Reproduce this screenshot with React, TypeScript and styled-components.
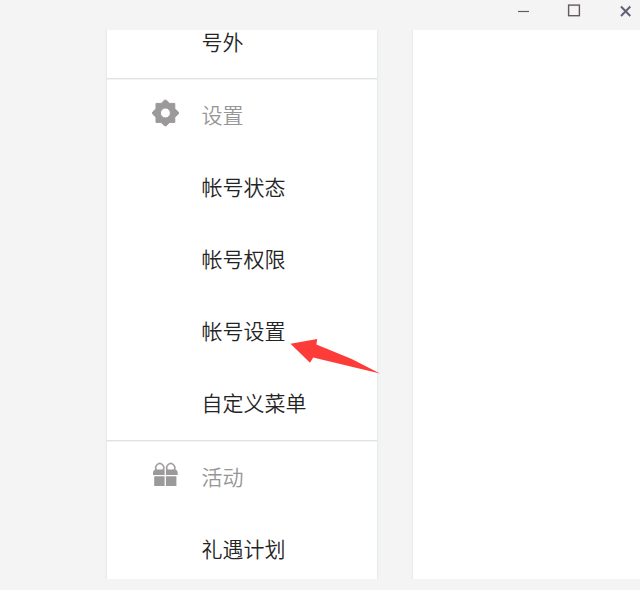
import React from 'react';
import styled, { createGlobalStyle } from 'styled-components';

const GlobalStyle = createGlobalStyle`
  * { box-sizing: border-box; }
  body { margin: 0; background: #f4f4f4; }
`;

const Window = styled.div`
  width: 640px;
  height: 590px;
  overflow: hidden;
  display: flex;
  flex-direction: column;
  background: #f4f4f4;
  font-family: 'Noto Sans CJK SC', sans-serif;
`;

const TitleBar = styled.header`
  flex: 0 0 30px;
  display: flex;
  justify-content: flex-end;
`;

const Controls = styled.svg`
  display: block;
  width: 140px;
  height: 30px;
`;

const Body = styled.div`
  height: 549px;
  overflow: hidden;
  display: flex;
  gap: 36px;
  padding-left: 107px;
`;

const Sidebar = styled.nav`
  position: relative;
  flex: 0 0 270px;
  background: #fff;
  box-shadow: 0 0 0 1px #e8eaec, 0 0 5px #e7e9ed;
`;

const Content = styled.main`
  flex: 1;
  background: #fff;
  box-shadow: 0 0 0 1px #e8eaec, 0 0 3px #e7e9ed;
`;

const Section = styled.section<{ $first?: boolean }>`
  padding-top: ${(p) => (p.$first ? '0' : '1px')};
  border-top: ${(p) => (p.$first ? 'none' : '1px solid #e2e2e3')};
  box-shadow: ${(p) => (p.$first ? 'none' : 'inset 0 1px #f3f3f3')};
`;

const Row = styled.div<{ $heading?: boolean; $short?: boolean }>`
  height: ${(p) => (p.$short ? '48px' : '72px')};
  display: grid;
  grid-template-columns: 28px 1fr;
  column-gap: 22px;
  align-items: ${(p) => (p.$short ? 'start' : 'center')};
  padding-left: 45px;
  font-size: 21px;
  font-weight: 350;
  line-height: ${(p) => (p.$short ? '23px' : '22px')};
  white-space: nowrap;
  color: ${(p) => (p.$heading ? '#969696' : '#242424')};
`;

const Label = styled.span<{ $short?: boolean }>`
  grid-column: 2;
  margin-left: -0.5px;
  margin-top: ${(p) => (p.$short ? '0' : '-5px')};
`;

const Icon = styled.svg`
  grid-area: 1 / 1;
  display: block;
  width: 28px;
  height: 28px;
  margin-top: -6px;
`;

const Pointer = styled.svg`
  position: absolute;
  left: 183px;
  top: 308px;
  width: 92px;
  height: 38px;
`;

const Gear = () => (
  <Icon viewBox="0 0 28 28">
    <path
      fill="#9b999a"
      stroke="#9b999a"
      strokeWidth="1"
      strokeLinejoin="round"
      fillRule="evenodd"
      d="M12.5 1.2H14.3L17.6 4.4H22.8V9.8L26.4 13.1V14.9L22.8 18.2V23.4H17.6L14.3 26.8H12.5L9.2 23.4H4V18.2L.6 14.9V13.1L4 9.8V4.4H9.2ZM13.4 9A5 5 0 1 0 13.4 19 5 5 0 1 0 13.4 9Z"
    />
  </Icon>
);

const Gift = () => (
  <Icon viewBox="0 0 28 28">
    <g fill="none" stroke="#a09e9f" strokeWidth="1.6">
      <path d="M4.6 9.4A4 4.2 0 1 1 10.9 9.4M15.6 9.4A4 4.2 0 1 1 21.9 9.4" />
    </g>
    <path
      fill="#9b999a"
      d="M3 8.5H12.6V14H1V11.6Q1 9.5 3 8.5ZM13.9 8.5H23.7Q25.7 9.5 25.7 11.6V14H13.9ZM2.2 15.3H12.6V24.9H2.2ZM13.9 15.3H24.4V24.9H13.9Z"
    />
  </Icon>
);

interface Group {
  title?: string;
  icon?: React.ReactNode;
  items: string[];
}

const groups: Group[] = [
  { items: ['号外'] },
  { title: '设置', icon: <Gear />, items: ['帐号状态', '帐号权限', '帐号设置', '自定义菜单'] },
  { title: '活动', icon: <Gift />, items: ['礼遇计划'] },
];

export default function App() {
  return (
    <Window>
      <GlobalStyle />
      <TitleBar>
        <Controls viewBox="0 0 140 30" fill="none" stroke="#66585f">
          <path d="M18 11.5H29" strokeWidth="1.2" />
          <rect x="68.6" y="5.1" width="10.8" height="10.6" strokeWidth="1.4" />
          <path d="M121 6.5 130.3 16M130.3 6.5 121 16" stroke="#626078" strokeWidth="2" />
        </Controls>
      </TitleBar>
      <Body>
        <Sidebar>
          {groups.map((g, i) => (
            <Section key={i} $first={i === 0}>
              {g.title && (
                <Row $heading>
                  {g.icon}
                  <Label>{g.title}</Label>
                </Row>
              )}
              {g.items.map((item) => (
                <Row key={item} $short={i === 0}>
                  <Label $short={i === 0}>{item}</Label>
                </Row>
              ))}
            </Section>
          ))}
          <Pointer viewBox="0 0 92 38">
            <path
              d="M.5 5.8 27.2 1 26.4 6.4 61.7 21 90 35.6 61.7 28.7 23.2 19.4 20 24.8Z"
              fill="#fd3b38"
            />
          </Pointer>
        </Sidebar>
        <Content />
      </Body>
    </Window>
  );
}
